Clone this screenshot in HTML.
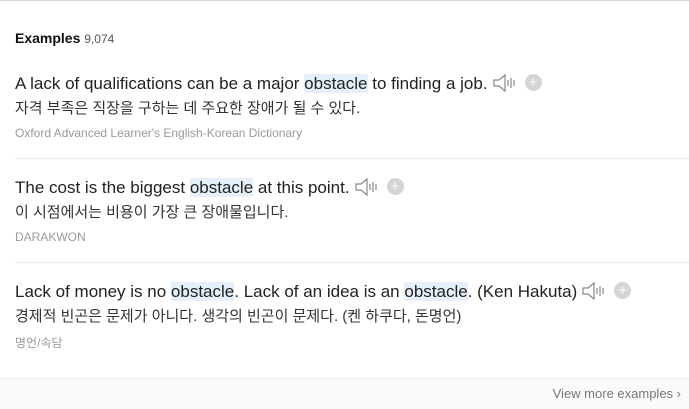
<!DOCTYPE html>
<html><head><meta charset="utf-8"><style>
*{margin:0;padding:0;box-sizing:border-box}
body{width:689px;height:409px;background:#fff;font-family:"Liberation Sans","Noto Sans CJK KR",sans-serif;position:relative;overflow:hidden;color:#222}
.top{position:absolute;top:0;left:0;right:0;border-top:1px solid #d5d5d5}
h2{position:absolute;left:15px;top:30px;font-size:14px;font-weight:bold;color:#111}
h2 span{font-weight:normal;font-size:12px;color:#555}
.blk{position:absolute;left:15px;right:0;height:104px;border-bottom:1px solid #ebebeb}
.en{position:absolute;top:1px;left:0;font-size:17px;line-height:22px;white-space:nowrap;color:#222}
.hl{background:#e6f0fa}
.ko{position:absolute;top:28px;left:0;font-size:15px;line-height:18px;color:#333;white-space:nowrap}
.src{position:absolute;top:54px;left:0;font-size:12px;color:#999;white-space:nowrap}
.ic{display:inline-block;vertical-align:middle;margin-left:5px;position:relative;top:-2px}
.plus{display:inline-block;width:17px;height:17px;border-radius:50%;background:#d5d5d5;color:#fff;font-size:15px;line-height:17px;text-align:center;vertical-align:middle;margin-left:8px;position:relative;top:-2px}
.foot{position:absolute;left:0;right:0;top:378px;bottom:0;background:#fafafa;border-top:1px solid #eee}
.foot span{position:absolute;right:8px;top:7px;font-size:13px;color:#777}
</style></head><body>
<div class="top"></div>
<h2>Examples <span>9,074</span></h2>
<div class="blk" style="top:72px;height:87px">
<div class="en">A lack of qualifications can be a major <span class="hl">obstacle</span> to finding a job.<svg class="ic" width="24" height="18" viewBox="0 0 24 18"><path d="M1 6h5l6-5v16l-6-5H1z" fill="none" stroke="#888" stroke-width="1.2"/><path d="M15 6v6M18 4v10M21 6v6" stroke="#888" stroke-width="1.2"/></svg><span class="plus">+</span></div>
<div class="ko">자격 부족은 직장을 구하는 데 주요한 장애가 될 수 있다.</div>
<div class="src">Oxford Advanced Learner's English-Korean Dictionary</div>
</div>
<div class="blk" style="top:176px;height:87px">
<div class="en">The cost is the biggest <span class="hl">obstacle</span> at this point.<svg class="ic" width="24" height="18" viewBox="0 0 24 18"><path d="M1 6h5l6-5v16l-6-5H1z" fill="none" stroke="#888" stroke-width="1.2"/><path d="M15 6v6M18 4v10M21 6v6" stroke="#888" stroke-width="1.2"/></svg><span class="plus">+</span></div>
<div class="ko">이 시점에서는 비용이 가장 큰 장애물입니다.</div>
<div class="src">DARAKWON</div>
</div>
<div class="blk" style="top:280px;height:98px;border:none">
<div class="en">Lack of money is no <span class="hl">obstacle</span>. Lack of an idea is an <span class="hl">obstacle</span>. (Ken Hakuta)<svg class="ic" width="24" height="18" viewBox="0 0 24 18"><path d="M1 6h5l6-5v16l-6-5H1z" fill="none" stroke="#888" stroke-width="1.2"/><path d="M15 6v6M18 4v10M21 6v6" stroke="#888" stroke-width="1.2"/></svg><span class="plus">+</span></div>
<div class="ko">경제적 빈곤은 문제가 아니다. 생각의 빈곤이 문제다. (켄 하쿠다, 돈명언)</div>
<div class="src">명언/속담</div>
</div>
<div class="foot"><span>View more examples ›</span></div>
</body></html>
